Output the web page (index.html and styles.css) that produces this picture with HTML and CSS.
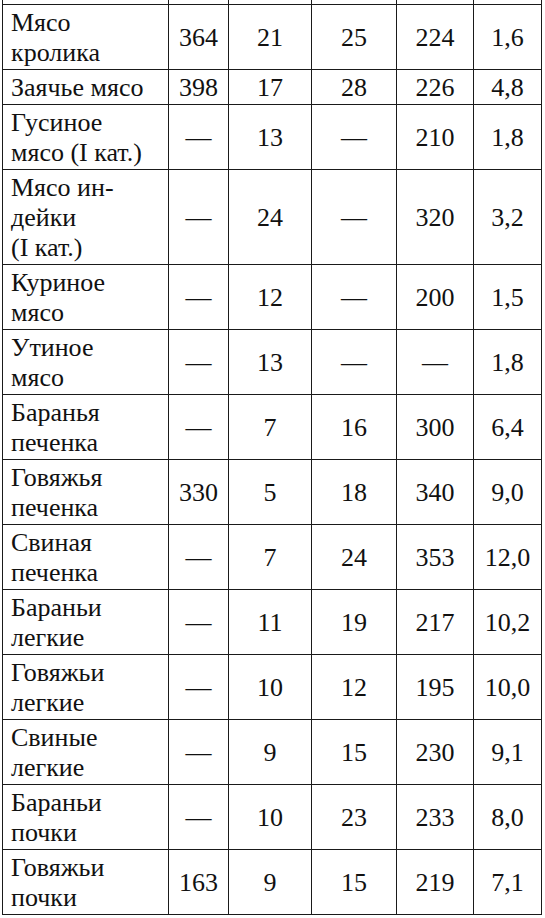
FILE: index.html
```html
<!DOCTYPE html>
<html lang="ru">
<head>
<meta charset="utf-8">
<link rel="stylesheet" href="styles.css">
</head>
<body>
<div class="tbl">
<div class="row cut"><div class="cell"></div><div class="cell"></div><div class="cell"></div><div class="cell"></div><div class="cell"></div><div class="cell"></div></div>
<div class="row r2"><div class="cell name">Мясо<br>кролика</div><div class="cell">364</div><div class="cell">21</div><div class="cell">25</div><div class="cell">224</div><div class="cell">1,6</div></div>
<div class="row r1"><div class="cell name">Заячье мясо</div><div class="cell">398</div><div class="cell">17</div><div class="cell">28</div><div class="cell">226</div><div class="cell">4,8</div></div>
<div class="row r2"><div class="cell name">Гусиное<br>мясо (I кат.)</div><div class="cell">—</div><div class="cell">13</div><div class="cell">—</div><div class="cell">210</div><div class="cell">1,8</div></div>
<div class="row r3"><div class="cell name">Мясо ин-<br>дейки<br>(I кат.)</div><div class="cell">—</div><div class="cell">24</div><div class="cell">—</div><div class="cell">320</div><div class="cell">3,2</div></div>
<div class="row r2"><div class="cell name">Куриное<br>мясо</div><div class="cell">—</div><div class="cell">12</div><div class="cell">—</div><div class="cell">200</div><div class="cell">1,5</div></div>
<div class="row r2"><div class="cell name">Утиное<br>мясо</div><div class="cell">—</div><div class="cell">13</div><div class="cell">—</div><div class="cell">—</div><div class="cell">1,8</div></div>
<div class="row r2"><div class="cell name">Баранья<br>печенка</div><div class="cell">—</div><div class="cell">7</div><div class="cell">16</div><div class="cell">300</div><div class="cell">6,4</div></div>
<div class="row r2"><div class="cell name">Говяжья<br>печенка</div><div class="cell">330</div><div class="cell">5</div><div class="cell">18</div><div class="cell">340</div><div class="cell">9,0</div></div>
<div class="row r2"><div class="cell name">Свиная<br>печенка</div><div class="cell">—</div><div class="cell">7</div><div class="cell">24</div><div class="cell">353</div><div class="cell">12,0</div></div>
<div class="row r2"><div class="cell name">Бараньи<br>легкие</div><div class="cell">—</div><div class="cell">11</div><div class="cell">19</div><div class="cell">217</div><div class="cell">10,2</div></div>
<div class="row r2"><div class="cell name">Говяжьи<br>легкие</div><div class="cell">—</div><div class="cell">10</div><div class="cell">12</div><div class="cell">195</div><div class="cell">10,0</div></div>
<div class="row r2"><div class="cell name">Свиные<br>легкие</div><div class="cell">—</div><div class="cell">9</div><div class="cell">15</div><div class="cell">230</div><div class="cell">9,1</div></div>
<div class="row r2"><div class="cell name">Бараньи<br>почки</div><div class="cell">—</div><div class="cell">10</div><div class="cell">23</div><div class="cell">233</div><div class="cell">8,0</div></div>
<div class="row r2"><div class="cell name">Говяжьи<br>почки</div><div class="cell">163</div><div class="cell">9</div><div class="cell">15</div><div class="cell">219</div><div class="cell">7,1</div></div>
</div>
</body>
</html>
```
FILE: styles.css
```css
html, body {
  margin: 0;
  padding: 0;
  background: #ffffff;
}
body {
  font-family: "Liberation Serif", serif;
}
.tbl {
  margin-left: 2px;
  width: 540.5px;
  border-left: 1.5px solid #1a1a1a;
  box-sizing: border-box;
}
.row {
  display: grid;
  grid-template-columns: 166px 60px 83px 85px 77px 68px;
}
.cell {
  font-family: "Liberation Serif", serif;
  font-size: 26px;
  line-height: 30px;
  color: #111111;
  border-right: 1.5px solid #1a1a1a;
  border-bottom: 1.5px solid #1a1a1a;
  box-sizing: border-box;
  display: flex;
  flex-direction: column;
  justify-content: center;
  align-items: center;
  text-align: center;
  padding-top: 3px;
  white-space: nowrap;
}
.name {
  align-items: flex-start;
  text-align: left;
  padding-left: 8px;
}
.cut { height: 4.5px; }
.cut .cell { padding: 0; }
.r1 { height: 35px; }
.r2 { height: 65px; }
.r3 { height: 95px; }
```
